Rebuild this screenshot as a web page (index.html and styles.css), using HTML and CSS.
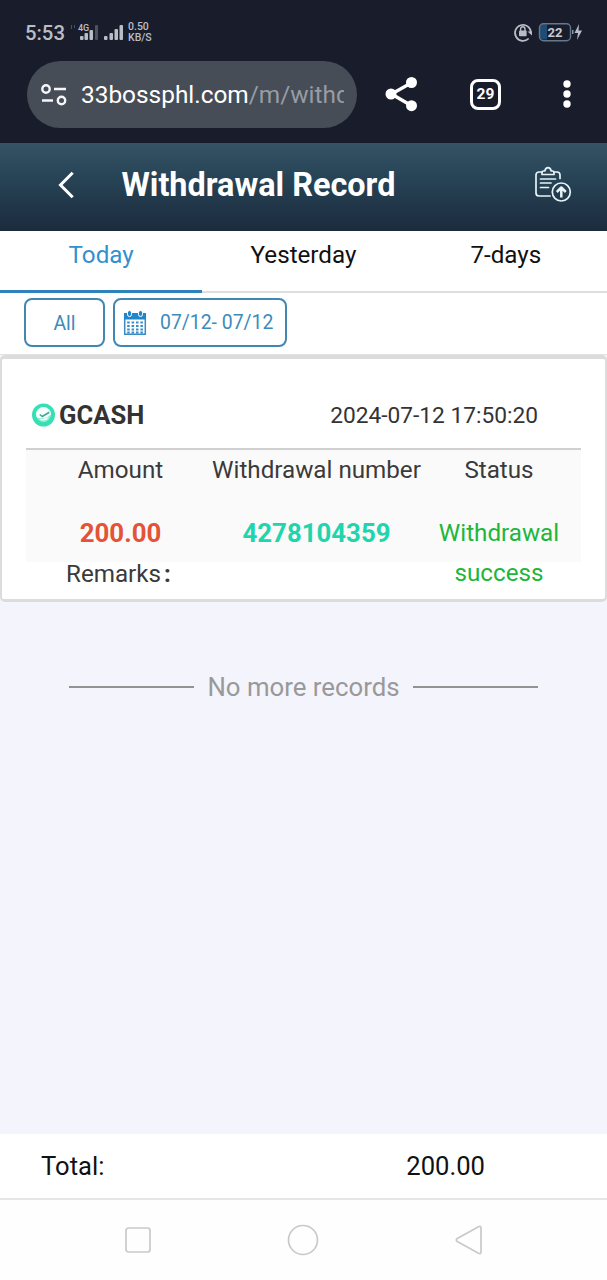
FILE: index.html
```html
<!DOCTYPE html>
<html lang="en">
<head>
<meta charset="utf-8">
<title>Withdrawal Record</title>
<link rel="stylesheet" href="styles.css">
</head>
<body>
<div class="phone">
  <div class="browser">
    <div class="status-bar">
      <span class="clock">5:53</span>
      <svg class="signals" width="54" height="24" viewBox="0 0 54 24">
        <g stroke="#4d515b" stroke-width="1"><path d="M.5 5v4M3.500 5v3"/></g>
        <text class="network" x="7" y="11">4G</text>
        <g fill="#b9bdc5"><rect x="9" y="16" width="3.500" height="4" rx="1"/><rect x="13.500" y="13" width="3.500" height="7" rx="1"/><rect x="18.500" y="10" width="3.500" height="10" rx="1"/><rect x="33" y="16" width="3.500" height="4" rx="1"/><rect x="38.500" y="13" width="3.500" height="7" rx="1"/><rect x="43.500" y="9" width="3.500" height="11" rx="1"/><rect x="48.500" y="5" width="3.500" height="15" rx="1"/></g>
        <rect x="24" y="5" width="3" height="15" rx="1" fill="#4d525d"/>
      </svg>
      <span class="speed"><span>0.50</span><span>KB/S</span></span>
      <svg class="power" width="72" height="24" viewBox="0 0 72 24">
        <path d="M16.200 18.500a8 8 0 1 1 2.300-6" fill="none" stroke="#b9bdc5" stroke-width="1.700" transform="translate(1.500 0)"/>
        <path d="M16.500 11.500h4.500v4z" fill="#b9bdc5"/>
        <rect x="8" y="10.500" width="7.600" height="5.800" rx="1" fill="#b9bdc5"/>
        <path d="M9.600 11V9a2.200 2.200 0 0 1 4.400 0v2" fill="none" stroke="#b9bdc5" stroke-width="1.400"/>
        <path d="M31 4.500h5v15H31a3 3 0 0 1-3-3v-9a3 3 0 0 1 3-3z" fill="#204b73"/>
        <rect x="28.500" y="3.700" width="31" height="17" rx="4" fill="none" stroke="#62798c" stroke-width="1.400"/>
        <rect x="61" y="10" width="1.500" height="4" fill="#8d949e"/>
        <path d="M68 4l-4.500 9H67l-1 7 5-9.500H67.500z" fill="#b9bdc5"/>
        <text class="battery" x="44" y="17" text-anchor="middle">22</text>
      </svg>
    </div>
    <div class="toolbar">
      <div class="address">
        <svg width="26" height="22" viewBox="0 0 26 22" fill="none" stroke="#f5f6f8" stroke-width="2.400"><circle cx="5" cy="5" r="3.700"/><path d="M13 5h12M1 16.500h11"/><circle cx="20.500" cy="16.500" r="3.700"/></svg>
        <div class="url">33bossphl.com<span>/m/withd</span></div>
      </div>
      <svg class="share" width="34" height="36" viewBox="0 0 34 36"><path d="M27 6.500L6.500 18L27 30" fill="none" stroke="#fff" stroke-width="3.400"/><g fill="#fff"><circle cx="26.500" cy="6.500" r="5.500"/><circle cx="6" cy="18" r="5.500"/><circle cx="26.500" cy="29.700" r="5.500"/></g></svg>
      <div class="tab-count">29</div>
      <svg class="more" width="8" height="28" viewBox="0 0 8 28" fill="#fff"><circle cx="4" cy="4" r="3.700"/><circle cx="4" cy="14" r="3.700"/><circle cx="4" cy="24" r="3.700"/></svg>
    </div>
  </div>

  <header class="header">
    <svg class="back" width="18" height="28" viewBox="0 0 18 28"><path d="M15.700 1.700L3.500 14l12.200 12.300" fill="none" stroke="#fff" stroke-width="3"/></svg>
    <h1>Withdrawal Record</h1>
    <svg class="records" width="38" height="38" viewBox="0 0 38 38" fill="none" stroke="#e8f3f7" stroke-width="1.700" stroke-linecap="round" stroke-linejoin="round"><path d="M8 7H5a3 3 0 0 0-3 3V28a3 3 0 0 0 3 3H16M20 7h3a3 3 0 0 1 3 3V13.500"/><path d="M8 9.500V7.400q0-1.400 1.500-1.400h1.300q.7-3.300 3.200-3.300t3.200 3.300h1.300q1.500 0 1.500 1.400v2.100z"/><path d="M6.500 14h15M6.500 18H17M6.500 22.500h8"/><circle cx="27.300" cy="27" r="9"/><path d="M27.300 32.500v-8M22.800 27l4.500-4.500 4.500 4.500" stroke-width="2.500" stroke-linecap="butt"/></svg>
  </header>

  <nav class="tabs">
    <a class="tab active">Today</a>
    <a class="tab">Yesterday</a>
    <a class="tab">7-days</a>
  </nav>

  <div class="filters">
    <div class="filter all">All</div>
    <div class="filter dates">
      <svg width="24" height="26" viewBox="0 0 24 26"><path d="M1.700 4h20.600v20.300H1.700z" fill="#fff" stroke="#388bc3" stroke-width="1.500"/><path d="M1 3h22v6.500H1z" fill="#2186ca"/><g fill="#2186ca" stroke="#fff" stroke-width="1"><rect x="4.500" y=".5" width="4" height="6" rx="2"/><rect x="15.500" y=".5" width="4" height="6" rx="2"/></g><path d="M4.200 12.500h16M4.200 16h16M4.200 19.500h16M4.200 22.500h16" stroke="#388bc3" stroke-width="2" stroke-dasharray="2.500 1.900"/></svg>
      <span>07/12- 07/12</span>
    </div>
  </div>

  <main class="content">
    <section class="card">
      <div class="card-head">
        <svg width="24" height="24" viewBox="0 0 24 24"><circle cx="12.500" cy="12" r="11.500" fill="#38dfb4"/><circle cx="12.500" cy="11.500" r="7.500" fill="#f6fffc"/><path d="M5 14q5 2.500 11 0 4-1.500 5-4.500l1 5-4 5H7z" fill="#38dfb4" opacity=".55"/><path d="M8.500 16q4 .5 8.500-2-.5 3.500-4.500 3.500-2.500 0-4-1.500z" fill="#f6fffc"/><path d="M8.800 11.500l2.500 2 7-4.300" fill="none" stroke="#45a88e" stroke-width="1.600"/></svg>
        <strong>GCASH</strong>
        <time>2024-07-12 17:50:20</time>
      </div>
      <div class="details">
        <div class="label">Amount</div>
        <div class="label wide">Withdrawal number</div>
        <div class="label">Status</div>
        <div class="value amount">200.00</div>
        <div class="value number">4278104359</div>
        <div class="value success">Withdrawal success</div>
      </div>
      <div class="remarks">Remarks<span>:</span></div>
    </section>
    <div class="end"><i></i><span>No more records</span><i></i></div>
  </main>

  <footer class="total"><span>Total:</span><span class="sum">200.00</span></footer>

  <div class="system-nav">
    <svg width="26" height="26" viewBox="0 0 26 26"><rect x="1" y="1" width="24" height="24" rx="2.500"/></svg>
    <svg width="32" height="32" viewBox="0 0 32 32"><circle cx="16" cy="16" r="14.500"/></svg>
    <svg width="28" height="30" viewBox="0 0 28 30"><path d="M23.500 1.700Q26 .5 26 3v24q0 2.500-2.500 1.300L2.300 16.500q-2-1.500 0-3z"/></svg>
  </div>
</div>
</body>
</html>
```

FILE: styles.css
```css
* { box-sizing: border-box; }
body { margin: 0; font-family: Roboto, "Liberation Sans", sans-serif; }
svg { display: block; flex: none; }
.phone { width: 607px; height: 1280px; display: flex; flex-direction: column; background: #fff; overflow: hidden; }
.phone > * { flex: none; }

.browser { height: 143px; background: #191d2b; }
.status-bar { height: 61px; padding: 20px 24px 0 25px; display: flex; align-items: flex-start; color: #b9bdc5; }
.clock { width: 46px; font-size: 20.3px; line-height: 26px; font-weight: 500; }
.network { font: 500 9px Roboto, sans-serif; fill: #b9bdc5; }
.speed { margin-left: 3px; padding-top: 2px; display: flex; flex-direction: column; font-size: 10.5px; line-height: 10.5px; font-weight: 500; }
.power { margin-left: auto; }
.battery { font: bold 13px Roboto, sans-serif; fill: #c7cbd1; }

.toolbar { height: 67px; padding-left: 27px; display: flex; align-items: center; }
.address { width: 330px; height: 67px; padding-left: 14px; border-radius: 34px; background: #474d57; display: flex; align-items: center; }
.url { width: 263px; margin-left: 14px; overflow: hidden; white-space: nowrap; font-size: 24.4px; line-height: 34px; color: #fff; }
.url span { color: #979ca5; }
.share { margin: 0 0 2px 28px; }
.tab-count { width: 31px; height: 31px; margin: 0 0 1px 51px; border: 3px solid #fff; border-radius: 8px; color: #fff; font: bold 15.5px/25px Roboto, sans-serif; text-align: center; }
.more { margin: 0 0 1px 61.5px; }

.header { height: 88px; display: flex; align-items: center; padding: 0 35px 4px 57px; background: linear-gradient(#355364, #284658 35%, #1b2b3c); color: #fff; }
.header h1 { margin: 0 0 0 46.5px; font-size: 32.4px; line-height: 40px; font-weight: 700; white-space: nowrap; }
.records { margin: 0 0 3px auto; }

.tabs { height: 62px; display: grid; grid-template-columns: 1fr 1fr 1fr; }
.tab { border-bottom: 2px solid #dedede; text-align: center; font-size: 24.2px; line-height: 49px; color: #111; }
.tab.active { border-bottom: 3px solid #2f83bd; color: #3290cd; }

.filters { height: 61px; padding: 5px 24px 0; display: flex; gap: 8px; }
.filter { height: 49px; border: 2px solid #4187b1; border-radius: 8px; font-size: 19.4px; line-height: 46px; color: #3c8bbb; white-space: nowrap; }
.all { width: 81px; padding-top: 1px; text-align: center; }
.dates { width: 174px; padding-left: 8px; display: flex; align-items: center; gap: 13px; }

.content { height: 780px; background: #f4f4fd; border-top: 1px solid #e2e2e2; }
.card { height: 247px; border: solid #dcdcdc; border-width: 4px 2px 3px; border-radius: 5px; background: #fff; padding: 0 24px; }
.card-head { height: 91px; padding: 23px 43px 0 5px; border-bottom: 2px solid #d0d0d0; display: flex; align-items: center; color: #333; }
.card-head strong { margin-left: 4px; font-size: 25.6px; }
.card-head time { margin-left: auto; font-size: 22.7px; }
.details { height: 112px; display: grid; grid-template-columns: 189px 203px 162px; grid-template-rows: 41px 71px; background: #fafafa; text-align: center; color: #3a3a3a; font-size: 24.2px; }
.label { line-height: 40px; white-space: nowrap; }
.wide { margin: 0 -10px; }
.value { padding-top: 22px; line-height: 40px; }
.amount { color: #e45237; font-weight: 700; font-size: 25.8px; }
.number { color: #20d5ad; font-weight: 700; font-size: 25.8px; }
.success { padding-left: 16px; padding-right: 16px; color: #20b63a; }
.remarks { padding-left: 40px; font-size: 24.2px; line-height: 24px; color: #3a3a3a; }
.remarks span { margin-left: 3px; font-weight: 700; }
.end { margin-top: 66px; display: flex; align-items: center; justify-content: center; gap: 13px; color: #999; font-size: 25.8px; line-height: 38px; white-space: nowrap; }
.end i { width: 125px; height: 2px; background: #929292; }

.total { height: 66px; padding: 0 122px 0 41px; display: flex; justify-content: space-between; align-items: center; border-bottom: 2px solid #e6e6e6; font-size: 25.6px; color: #111; }
.system-nav { height: 80px; padding: 0 124px 0 125px; display: flex; align-items: center; justify-content: space-between; background: #fefefe; }
.system-nav svg { fill: none; stroke: #c9c9c9; stroke-width: 1.7; }
```
